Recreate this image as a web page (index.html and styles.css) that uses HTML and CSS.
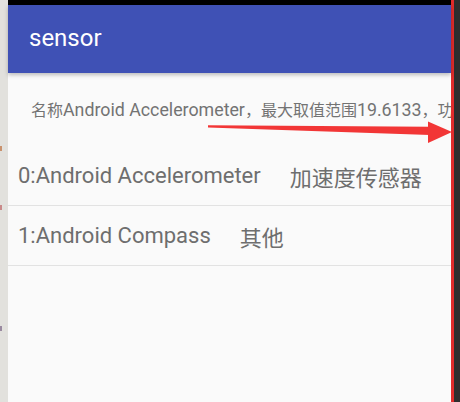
FILE: index.html
```html
<!DOCTYPE html>
<html>
<head>
<meta charset="utf-8">
<link rel="stylesheet" href="styles.css">
</head>
<body>
<div class="frame">
  <div class="side-left">
    <span class="mark m1"></span>
    <span class="mark m2"></span>
    <span class="mark m3"></span>
  </div>
  <div class="screen">
    <div class="status"></div>
    <div class="toolbar"><span class="title">sensor</span></div>
    <div class="content">
      <p class="info">名称<span class="lat">Android Accelerometer</span>，最大取值范围<span class="lat">19.6133</span>，功耗</p>
      <ul class="list">
        <li class="row"><span>0:Android Accelerometer</span><span>加速度传感器</span></li>
        <li class="row"><span>1:Android Compass</span><span>其他</span></li>
      </ul>
    </div>
  </div>
  <div class="red-edge"></div>
  <div class="dark-edge"></div>
</div>
<svg class="arrow" width="460" height="402" viewBox="0 0 460 402">
  <polygon points="208,125.2 430,126.8 430,135 208,127.4" fill="#f23636"/>
  <polygon points="428,121.5 452,132 428,143" fill="#f23636"/>
</svg>
</body>
</html>
```
FILE: styles.css
```css
html, body {
  margin: 0;
  padding: 0;
  width: 460px;
  height: 402px;
  overflow: hidden;
  background: #fafafa;
}
.frame {
  display: flex;
  height: 402px;
}
.side-left {
  width: 8px;
  flex: none;
  background: #e2e1dd;
  position: relative;
}
.mark {
  position: absolute;
  left: 0;
  width: 2px;
  height: 5px;
}
.m1 { top: 146px; background: #c9926e; }
.m2 { top: 205px; background: #c98a8a; }
.m3 { top: 326px; background: #9a8aa0; }
.screen {
  width: 443px;
  flex: none;
  display: flex;
  flex-direction: column;
  background: #fafafa;
}
.status {
  height: 5px;
  background: #000;
}
.toolbar {
  height: 68px;
  background: #3f51b5;
  display: flex;
  align-items: center;
  padding-left: 21px;
  box-shadow: 0 2px 4px rgba(0,0,0,0.25);
  position: relative;
  z-index: 1;
}
.title {
  font-family: Roboto, "Noto Sans", sans-serif;
  font-size: 24px;
  color: #fff;
  line-height: 1;
  margin-top: -3px;
}
.content {
  flex: 1;
}
.info {
  margin: 26px 0 0 0;
  padding-left: 23px;
  height: 22px;
  white-space: nowrap;
  overflow: hidden;
  font-family: Roboto, "Noto Sans CJK SC", sans-serif;
  font-size: 16px;
  line-height: 22px;
  color: #737373;
}
.lat {
  font-size: 17.8px;
}
.list {
  list-style: none;
  margin: 25px 0 0 0;
  padding: 0;
}
.row {
  height: 59px;
  border-bottom: 1px solid #e2e2e2;
  display: flex;
  align-items: center;
  gap: 29px;
  padding-left: 10px;
  font-family: Roboto, "Noto Sans CJK SC", sans-serif;
  font-size: 22px;
  color: #6e6e6e;
  white-space: nowrap;
}
.red-edge {
  width: 3px;
  flex: none;
  background: #e02c2c;
}
.dark-edge {
  width: 6px;
  flex: none;
  background: #2e2e2e;
}
.arrow {
  position: absolute;
  left: 0;
  top: 0;
  pointer-events: none;
}
```
